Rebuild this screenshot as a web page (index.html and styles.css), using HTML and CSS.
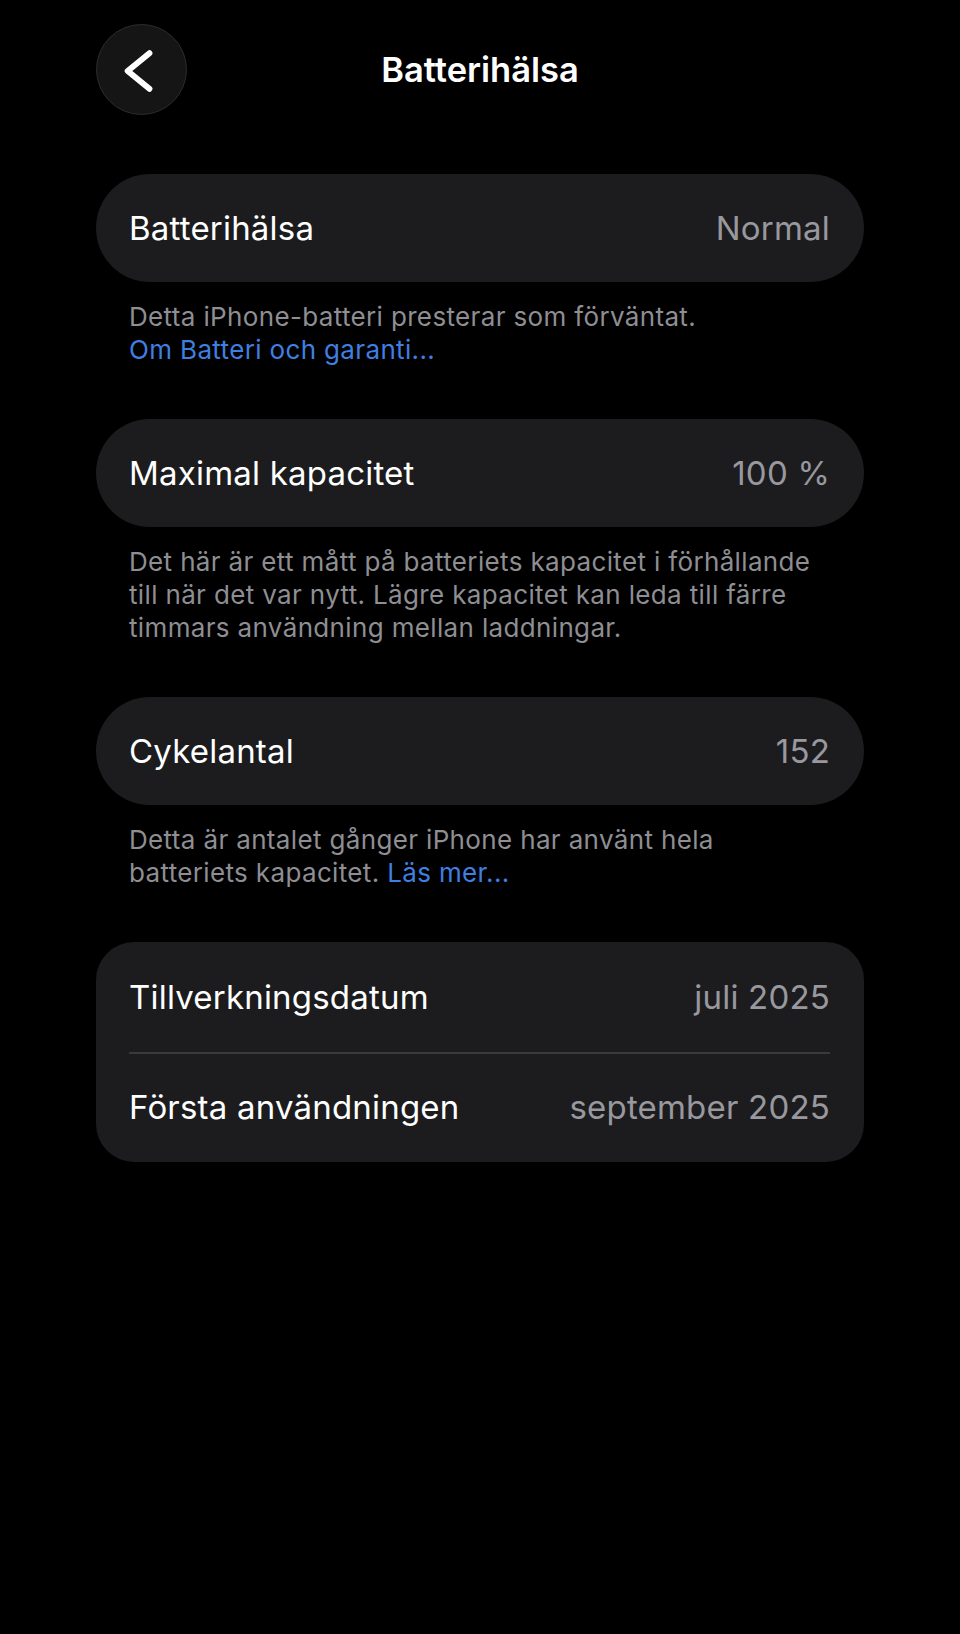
FILE: index.html
```html
<!DOCTYPE html>
<html lang="sv">
<head>
  <meta charset="UTF-8" />
  <meta name="viewport" content="width=device-width, initial-scale=1.0"/>
  <title>Batterihälsa</title>
  <link rel="stylesheet" href="styles.css">
</head>
<body>

  <header class="nav">
    <button class="back" aria-label="Tillbaka">
      <svg width="90" height="90" viewBox="0 0 90 90">
        <path d="M53 28 L31 46 L53 64" fill="none" stroke="#fff" stroke-width="6" stroke-linecap="round" stroke-linejoin="round"/>
      </svg>
    </button>
    <h1>Batterihälsa</h1>
    <span></span>
  </header>

  <section class="group">
    <div class="card">
      <div class="row">
        <span class="label">Batterihälsa</span>
        <span class="value">Normal</span>
      </div>
    </div>
    <p class="note">Detta iPhone-batteri presterar som förväntat.<br><a href="#">Om Batteri och garanti...</a></p>
  </section>

  <section class="group">
    <div class="card">
      <div class="row">
        <span class="label">Maximal kapacitet</span>
        <span class="value">100 %</span>
      </div>
    </div>
    <p class="note">Det här är ett mått på batteriets kapacitet i förhållande till när det var nytt. Lägre kapacitet kan leda till färre timmars användning mellan laddningar.</p>
  </section>

  <section class="group">
    <div class="card">
      <div class="row">
        <span class="label">Cykelantal</span>
        <span class="value">152</span>
      </div>
    </div>
    <p class="note">Detta är antalet gånger iPhone har använt hela batteriets kapacitet. <a href="#">Läs mer...</a></p>
  </section>

  <section class="group">
    <div class="card card-multi">
      <div class="row">
        <span class="label">Tillverkningsdatum</span>
        <span class="value">juli 2025</span>
      </div>
      <div class="row">
        <span class="label">Första användningen</span>
        <span class="value">september 2025</span>
      </div>
    </div>
  </section>

</body>
</html>
```

FILE: styles.css
```css
body {
  font-family: 'Inter', 'Roboto', sans-serif;
  margin: 0;
  padding: 24px 96px;
  background-color: #000;
  color: #fff;
}

.nav {
  display: grid;
  grid-template-columns: 91px 1fr 91px;
  align-items: center;
  height: 91px;
  margin-bottom: 59px;
}

.back {
  width: 91px;
  height: 91px;
  padding: 0;
  border: 1.5px solid #2c2c2e;
  border-radius: 50%;
  background-color: #151516;
  display: flex;
  align-items: center;
  justify-content: center;
  cursor: pointer;
}

.nav h1 {
  margin: 0;
  text-align: center;
  font-size: 34.5px;
  font-weight: 600;
}

.group {
  margin-bottom: 53px;
}

.card {
  background-color: #1c1c1e;
  border-radius: 54px;
}

.card-multi {
  border-radius: 38px;
}

.row {
  display: flex;
  justify-content: space-between;
  align-items: center;
  height: 108px;
  padding: 0 34px 0 33px;
  font-size: 33px;
  letter-spacing: 0.2px;
}

.card-multi .row {
  height: 110px;
}

.card-multi .row + .row {
  position: relative;
}

.card-multi .row + .row::before {
  content: "";
  position: absolute;
  top: 0;
  left: 33px;
  right: 34px;
  height: 1.5px;
  background-color: #3a3a3c;
}

.label {
  color: #fff;
}

.value {
  color: #98989e;
}

.note {
  margin: 18px 0 0;
  padding: 0 33px;
  font-size: 26px;
  letter-spacing: 0.35px;
  line-height: 33px;
  color: #8e8e93;
}

.note a {
  color: #3f7fe0;
  text-decoration: none;
}
```
